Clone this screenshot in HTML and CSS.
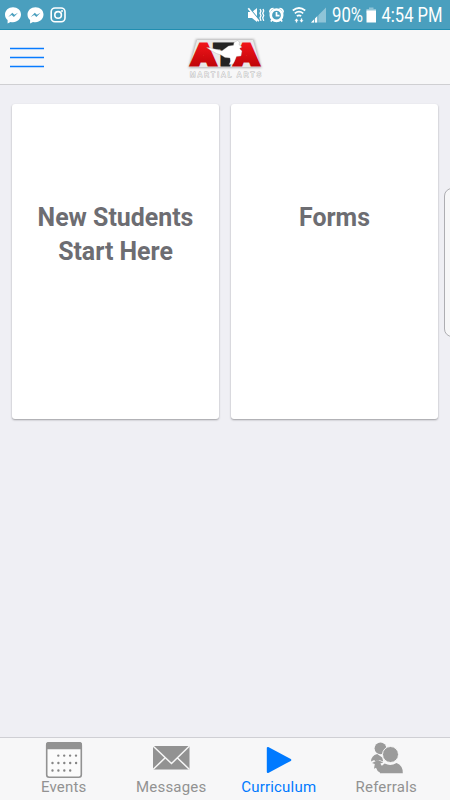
FILE: index.html
```
<!DOCTYPE html>
<html lang="en">
<head>
<meta charset="utf-8">
<title>ATA Martial Arts</title>
<link rel="stylesheet" href="styles.css">
</head>
<body>
<div class="app">
  <div class="status">
    <svg class="status-left" width="66" height="30" viewBox="0 0 66 30">
      <g id="chat"><path fill="#fff" d="M13 7.300c-4.500 0-8 3.200-8 7.300 0 2.300 1 4.200 2.600 5.500v3.400l2.900-1.600c.8.2 1.600.3 2.500.3 4.500 0 8-3.300 8-7.600s-3.500-7.300-8-7.300z"/><path fill="#4a9fbe" d="M8.200 17l4.100-4.300 2.100 2.100 3.600-2.100-4.100 4.400-2.200-2.200z"/></g>
      <use href="#chat" x="22.500"/>
      <g fill="none" stroke="#fff" stroke-width="1.600"><rect x="51.200" y="8" width="13.800" height="13.800" rx="3.800"/><circle cx="58.100" cy="14.900" r="3.300"/></g><circle cx="62" cy="11" r="1" fill="#fff"/>
    </svg>
    <svg class="status-right" width="203" height="30" viewBox="247 0 203 30">
      <g fill="#fff"><path d="M248 12h4l5-4v14l-5-4h-4z"/><path d="M248.800 7.500l11 13" stroke="#4a9fbe" stroke-width="1.300"/><path d="M248.300 8.200l10.500 13" stroke="#fff" stroke-width="1.700"/><path d="M260 9l1 2-1 2.300 1 2.300-1 2.300 1 3M263 9l.7 2-1 2.300 1 2.300-1 2.300 1 3" fill="none" stroke="#fff" stroke-width="1.300"/></g>
      <circle cx="276.500" cy="15.200" r="5.700" fill="none" stroke="#fff" stroke-width="2.600"/><path d="M276.500 12v3.700h3M269.800 12.500c0-2.800 1.500-4 3.800-4M283.200 12.500c0-2.800-1.500-4-3.800-4M272.500 19.500l-1.700 2M280.500 19.500l1.700 2" fill="none" stroke="#fff" stroke-width="1.700"/>
      <g fill="none" stroke="#fff" stroke-width="1.700"><path d="M292.800 10.500q6.200-5 12.400 0M294.800 13.400q4.200-3.400 8.400 0M296.800 16.200q2.200-1.700 4.400 0"/></g>
      <path fill="#fff" d="M296.500 18.500l2 2.200h-1.300v1.800h-1.400v-1.800h-1.300zM301.500 22.500l-2-2.300h1.300v-1.700h1.400v1.700h1.300z"/>
      <path fill="#8fc4d7" d="M326 7.500v15h-15z"/><path fill="#fff" d="M317.500 16v6.500H311z"/><path stroke="#4a9fbe" stroke-width=".8" d="M314.500 14v9M317.800 13v10"/>
      <g class="status-text"><text x="332" y="22.200" textLength="31" lengthAdjust="spacingAndGlyphs">90%</text><text x="381.500" y="22.200" textLength="61" lengthAdjust="spacingAndGlyphs">4:54 PM</text></g>
      <path fill="#8fc4d7" d="M369 7.500h4.500v1.500h2.500v4h-9.500V9h2.500z"/><path fill="#fff" d="M366.500 10.500h9.500v12h-9.500z"/>
    </svg>
  </div>
  <header class="header">
    <svg class="menu" width="34" height="22" viewBox="0 0 34 22"><path d="M0 2.500h34M0 11.500h34M0 20.500h34" stroke="#087bff" stroke-width="1.500"/></svg>
    <svg class="logo" width="82" height="48" viewBox="184 33 82 48">
      <defs>
        <linearGradient id="red" gradientUnits="userSpaceOnUse" x1="0" y1="41" x2="0" y2="66"><stop stop-color="#f5161b"/><stop offset="1" stop-color="#c00509"/></linearGradient>
        <filter id="glow" x="-10%" y="-20%" width="120%" height="140%"><feGaussianBlur stdDeviation="1.200"/></filter>
      </defs>
      <path d="M196 39h58l7.500 29h-73z" fill="#777" opacity=".5" filter="url(#glow)"/>
      <path d="M197 40h56l7.500 27h-71z" fill="#e9e9e9"/>
      <g class="ata"><text class="tee" x="214" y="64.700" textLength="23" lengthAdjust="spacingAndGlyphs">T</text><text x="191.500" y="64.700" textLength="24" lengthAdjust="spacingAndGlyphs" fill="url(#red)" stroke="url(#red)">A</text><text x="234.500" y="64.700" textLength="24" lengthAdjust="spacingAndGlyphs" fill="url(#red)" stroke="url(#red)">A</text></g>
      <path fill="#fff" stroke="#999" stroke-width=".3" d="M206.500 47.500l3 .3 12.500 3 6.500-4.800 5-.8.500-2.700 3.500-2 2 1.500-.5 2.700 3 2.300-2.500 1.500 2.500 2.500-1 5-4.500.5-2 5-1.500 2.500-4 .5 1.700-3.500-.7-3-5-.5-4-2.500-4.500-1.500-6-3.300z"/>
      <text class="martial" x="190" y="76.600" textLength="71" lengthAdjust="spacing">MARTIAL ARTS</text>
    </svg>
  </header>
  <main class="cards">
    <div class="card">New Students Start Here</div>
    <div class="card">Forms</div>
  </main>
  <div class="edge-handle"></div>
  <nav class="tabs">
    <div class="tab">
      <svg width="38" height="38" viewBox="0 0 38 38"><rect x="1.700" y="1.700" width="34.600" height="34.600" rx="2.500" fill="#fbfbfb" stroke="#929292" stroke-width="1.600"/><path fill="#929292" d="M1 8.300V3.500Q1 1 3.500 1h31Q37 1 37 3.500v4.800z"/><g fill="none" stroke="#858585" stroke-width="2.400" stroke-linecap="round" stroke-dasharray="0 5.900"><path d="M13.300 14.600h18"/><path d="M7.500 22h24"/><path d="M7.500 29.500h18"/></g></svg>
      <span>Events</span>
    </div>
    <div class="tab">
      <svg width="38" height="38" viewBox="0 0 38 38"><path fill="#929292" d="M1 5h36.500v23.500H1z"/><path d="M1 5l18.500 17.500L37.500 5M1 28.500L13.500 16.500M37.500 28.500L25 16.500" fill="none" stroke="#f7f7f7" stroke-width="1.500"/></svg>
      <span>Messages</span>
    </div>
    <div class="tab active">
      <svg width="38" height="38" viewBox="0 0 38 38"><path d="M7.800 7v24l22.500-12z" fill="#007aff" stroke="#007aff" stroke-width="2" stroke-linejoin="round"/></svg>
      <span>Curriculum</span>
    </div>
    <div class="tab">
      <svg width="38" height="38" viewBox="0 0 38 38"><g fill="#9b9b9b"><circle cx="13.500" cy="7.300" r="5.900"/><path d="M4 20.500q.2-6 6.200-7.500l5 3.500 1 4-4-1.500-4 1.300-1-1.200z"/><path d="M5 22l6-3 5.300 2.500-3 1 2.700 4-2.500 5.500q-3.500-1.500-4.500-5.300l-2 1 .8-4.700z"/><circle cx="23.500" cy="13.500" r="8" stroke="#f7f7f7"/><path d="M13 32.200q-.5-6.500 4.700-9.700 5.800 3 11.800-.5 6.500 2.500 6.300 10.200z"/></g></svg>
      <span>Referrals</span>
    </div>
  </nav>
</div>
</body>
</html>
```
FILE: styles.css
```
* { box-sizing: border-box; }
body { margin: 0; font-family: Roboto, sans-serif; }
.app { position: relative; display: flex; flex-direction: column; width: 450px; height: 800px; background: #efeff4; overflow: hidden; }
.status { display: flex; justify-content: space-between; height: 30px; background: #4a9fbe; border-bottom: 1px solid #218eb0; flex: none; }
.status svg { flex: none; }
.status-text { font: 400 19.300px Roboto, sans-serif; fill: #fff; }
.header { display: flex; align-items: flex-start; height: 55px; padding-left: 10px; background: #f7f7f8; border-bottom: 1px solid #cfcfd2; flex: none; }
.menu { margin-top: 16px; }
.logo { margin: 3px 0 0 140px; }
.ata { font: 900 30px Roboto, sans-serif; stroke-width: 3px; }
.tee { fill: #242424; stroke: #242424; }
.martial { font: 400 6.500px "Liberation Sans", sans-serif; fill: #fff; stroke: #bbb; stroke-width: 1px; paint-order: stroke; }
.cards { display: flex; gap: 12px; padding: 19px 12px 0; flex: 1; align-items: flex-start; }
.card { flex: 1; height: 315px; padding: 97px 20px 0; border-radius: 3px; background: #fff; box-shadow: 0 1px 2px rgba(0,0,0,.35); color: #6d6d72; font-size: 24.900px; font-weight: 700; line-height: 34px; text-align: center; }
.edge-handle { position: absolute; left: 444px; top: 188px; width: 20px; height: 149px; border: 1px solid #aeaeb2; border-radius: 8px; background: #f7f7f8; }
.tabs { display: flex; height: 63px; padding: 3px 10px 0; background: #f7f7f8; border-top: 1px solid #cfcfd4; flex: none; }
.tab { flex: 1; display: flex; flex-direction: column; align-items: center; color: #929292; font-size: 15px; line-height: 17px; letter-spacing: .2px; }
.tab svg { display: block; flex: none; }
.active { color: #007aff; }
```
